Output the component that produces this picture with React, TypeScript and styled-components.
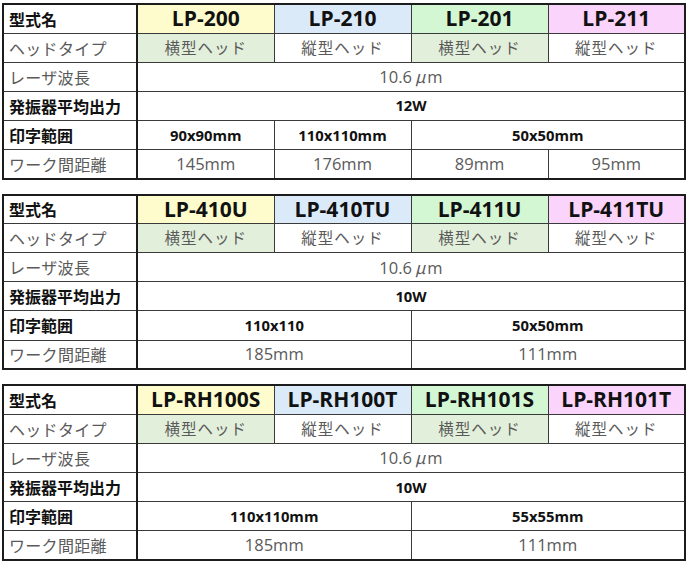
import React from "react"
import styled, { createGlobalStyle } from "styled-components"

const GlobalStyle = createGlobalStyle`
  html, body {
    margin: 0;
    padding: 0;
    background: #fff;
  }
  body {
    font-family: "Open Sans", "Noto Sans CJK JP", sans-serif;
  }
`

const Page = styled.div`
  display: flex;
  flex-direction: column;
  gap: 14px;
  padding: 3px 0 0 2px;
  width: 688px;
`

const Table = styled.table`
  width: 682px;
  table-layout: fixed;
  border-collapse: collapse;
  border: 2px solid #1c1c1c;
`

const Row = styled.tr`
  height: 29.1px;
`

const Cell = styled.td<{ $bg?: string; $bold?: boolean }>`
  border: 1px solid #3a3a3a;
  padding: 0;
  text-align: center;
  vertical-align: middle;
  background: ${({ $bg }) => $bg || "#fff"};
  color: ${({ $bold }) => ($bold ? "#111" : "#5a5a5a")};
  font-weight: ${({ $bold }) => ($bold ? 700 : 400)};
  font-size: ${({ $bold }) => ($bold ? "14.8px" : "16.5px")};
  line-height: 1;
  white-space: nowrap;
`

const Label = styled.td<{ $bold?: boolean }>`
  border: 1px solid #3a3a3a;
  border-right: 2px solid #1c1c1c;
  padding: 0 0 0 5px;
  text-align: left;
  vertical-align: middle;
  font-family: "Noto Sans CJK JP", sans-serif;
  font-size: 16px;
  line-height: 1;
  color: ${({ $bold }) => ($bold ? "#111" : "#5a5a5a")};
  font-weight: ${({ $bold }) => ($bold ? 700 : 400)};
  letter-spacing: ${({ $bold }) => ($bold ? "0" : "0.3px")};
`

const Model = styled.td<{ $bg: string }>`
  border: 1px solid #3a3a3a;
  padding: 0;
  text-align: center;
  vertical-align: middle;
  background: ${({ $bg }) => $bg};
  color: #111;
  font-weight: 700;
  font-size: 21px;
  line-height: 1;
  white-space: nowrap;
`

const HeadType = styled(Cell)`
  font-family: "Noto Sans CJK JP", sans-serif;
  font-size: 15.5px;
  letter-spacing: 1px;
  color: #5a5a5a;
`

const Micro = styled.span`
  font-family: "Noto Sans CJK JP", serif;
  font-style: italic;
  margin: 0 2px 0 3px;
`

const HEAD_BG = ["#fefccc", "#dbeaf8", "#d3f7d3", "#fbd4fb"]
const GREEN = "#e2efda"

type Span = { text: string; span?: number }

type Spec = {
  models: string[]
  power: string
  area: Span[]
  distance: Span[]
}

const specs: Spec[] = [
  {
    models: ["LP-200", "LP-210", "LP-201", "LP-211"],
    power: "12W",
    area: [{ text: "90x90mm" }, { text: "110x110mm" }, { text: "50x50mm", span: 2 }],
    distance: [{ text: "145mm" }, { text: "176mm" }, { text: "89mm" }, { text: "95mm" }],
  },
  {
    models: ["LP-410U", "LP-410TU", "LP-411U", "LP-411TU"],
    power: "10W",
    area: [{ text: "110x110", span: 2 }, { text: "50x50mm", span: 2 }],
    distance: [{ text: "185mm", span: 2 }, { text: "111mm", span: 2 }],
  },
  {
    models: ["LP-RH100S", "LP-RH100T", "LP-RH101S", "LP-RH101T"],
    power: "10W",
    area: [{ text: "110x110mm", span: 2 }, { text: "55x55mm", span: 2 }],
    distance: [{ text: "185mm", span: 2 }, { text: "111mm", span: 2 }],
  },
]

function SpecTable({ spec }: { spec: Spec }) {
  return (
    <Table>
      <colgroup>
        <col style={{ width: 134 }} />
        <col style={{ width: 137 }} />
        <col style={{ width: 137 }} />
        <col style={{ width: 137 }} />
        <col style={{ width: 137 }} />
      </colgroup>
      <tbody>
        <Row>
          <Label $bold>型式名</Label>
          {spec.models.map((m, i) => (
            <Model key={m} $bg={HEAD_BG[i]}>{m}</Model>
          ))}
        </Row>
        <Row>
          <Label>ヘッドタイプ</Label>
          <HeadType $bg={GREEN}>横型ヘッド</HeadType>
          <HeadType>縦型ヘッド</HeadType>
          <HeadType $bg={GREEN}>横型ヘッド</HeadType>
          <HeadType>縦型ヘッド</HeadType>
        </Row>
        <Row>
          <Label>レーザ波長</Label>
          <Cell colSpan={4}>
            10.6<Micro>μ</Micro>m
          </Cell>
        </Row>
        <Row>
          <Label $bold>発振器平均出力</Label>
          <Cell colSpan={4} $bold>{spec.power}</Cell>
        </Row>
        <Row>
          <Label $bold>印字範囲</Label>
          {spec.area.map((a, i) => (
            <Cell key={i} colSpan={a.span || 1} $bold>{a.text}</Cell>
          ))}
        </Row>
        <Row>
          <Label>ワーク間距離</Label>
          {spec.distance.map((d, i) => (
            <Cell key={i} colSpan={d.span || 1}>{d.text}</Cell>
          ))}
        </Row>
      </tbody>
    </Table>
  )
}

export default function App() {
  return (
    <>
      <GlobalStyle />
      <Page>
        {specs.map((s, i) => (
          <SpecTable key={i} spec={s} />
        ))}
      </Page>
    </>
  )
}
